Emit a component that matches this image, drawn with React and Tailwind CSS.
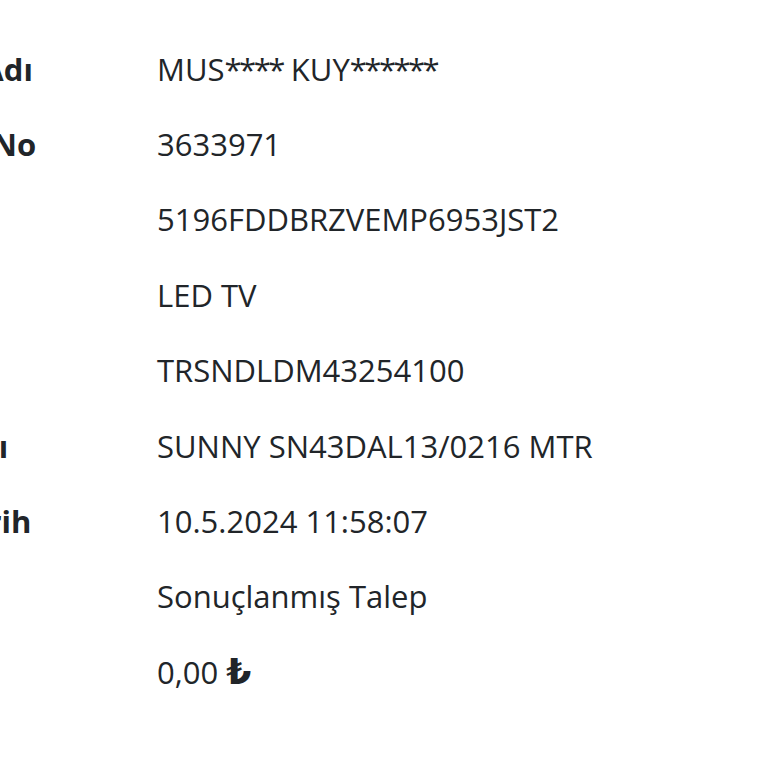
import React from 'react';

const rows = [
  { label: 'Müşteri Adı', value: 'MUS**** KUY******' },
  { label: 'Kayıt Fiş No', value: '3633971' },
  { label: 'Seri No', value: '5196FDDBRZVEMP6953JST2' },
  { label: 'Ürün', value: 'LED TV' },
  { label: 'Kod', value: 'TRSNDLDM43254100' },
  { label: 'Model Adı', value: 'SUNNY SN43DAL13/0216 MTR' },
  { label: 'Kabul Tarih', value: '10.5.2024 11:58:07' },
  { label: 'Durum', value: 'Sonuçlanmış Talep' },
  { label: 'Tutar', value: '0,00', lira: true },
];

// asterisks in the masked name are narrower in the original font
const Masked = ({ text }) =>
  text.split(/(\*+)/).map((part, i) =>
    part.startsWith('*') ? (
      <span key={i} className="tracking-[-2.5px]">{part}</span>
    ) : (
      <span key={i}>{part}</span>
    )
  );

export default function App() {
  return (
    <div
      className="w-[768px] h-[768px] overflow-hidden bg-white text-[#212529]"
      style={{ fontFamily: '"Open Sans", "Noto Sans", sans-serif' }}
    >
      <div className="pt-[31px] -ml-[146px]">
        {rows.map((row) => (
          <div key={row.label} className="flex items-center h-[75.4px] text-[31px] leading-[46px]">
            <div className="w-[303px] shrink-0 font-bold whitespace-nowrap">{row.label}</div>
            <div className="whitespace-nowrap">
              <Masked text={row.value} />
              {row.lira && (
                <span
                  className="font-bold ml-[8px] text-[36px] leading-none"
                  style={{ fontFamily: '"DejaVu Sans", sans-serif' }}
                >
                  ₺
                </span>
              )}
            </div>
          </div>
        ))}
      </div>
    </div>
  );
}
